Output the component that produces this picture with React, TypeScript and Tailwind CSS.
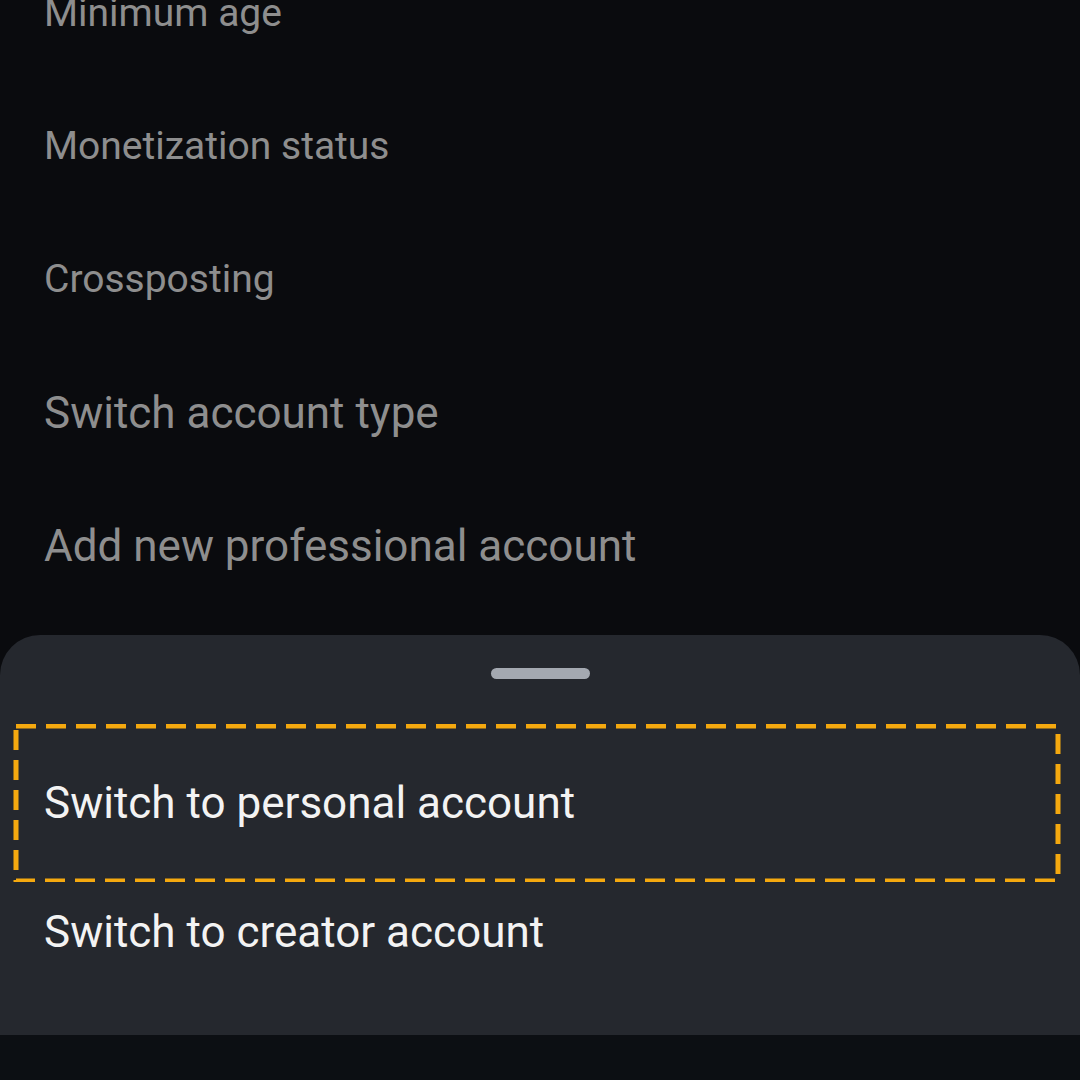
import React from 'react';

const settings = [
  { label: 'Minimum age', size: 'text-[39px]' },
  { label: 'Monetization status', size: 'text-[39px]' },
  { label: 'Crossposting', size: 'text-[39px]' },
  { label: 'Switch account type', size: 'text-[44px]' },
  { label: 'Add new professional account', size: 'text-[44px]' },
];

const DashedHighlight = () => (
  <svg
    className="pointer-events-none absolute left-0 top-0 h-full w-full"
    viewBox="0 0 1080 158"
    preserveAspectRatio="none"
  >
    <rect
      x="16"
      y="2"
      width="1042"
      height="155"
      fill="none"
      stroke="#f5a90f"
      strokeWidth="5"
      strokeDasharray="20 10"
    />
  </svg>
);

export default function App() {
  return (
    <div
      className="relative flex h-[1080px] w-[1080px] flex-col overflow-hidden bg-[#0a0b0e]"
      style={{ fontFamily: 'Roboto, "Noto Sans", sans-serif' }}
    >
      {/* settings list behind the sheet */}
      <div className="-mt-[53px] flex flex-col">
        {settings.map(({ label, size }) => (
          <div key={label} className="flex h-[133px] items-center px-[44px]">
            <span className={`${size} leading-none text-[#8e8e8e]`}>{label}</span>
          </div>
        ))}
      </div>

      {/* bottom sheet */}
      <div className="absolute left-0 top-[635px] flex h-[400px] w-full flex-col rounded-t-[40px] bg-[#25282e]">
        <div className="flex justify-center pt-[33px]">
          <div className="h-[11px] w-[99px] rounded-full bg-[#a4a9b1]" />
        </div>
        <div className="relative mt-[45px] flex h-[158px] items-center px-[44px]">
          <span className="text-[44px] leading-none text-[#f3f3f3]">Switch to personal account</span>
          <DashedHighlight />
        </div>
        <div className="flex h-[100px] items-center px-[44px]">
          <span className="text-[44px] leading-none text-[#f3f3f3]">Switch to creator account</span>
        </div>
      </div>

      {/* nav bar */}
      <div className="absolute bottom-0 left-0 h-[45px] w-full bg-[#0c0f13]" />
    </div>
  );
}
